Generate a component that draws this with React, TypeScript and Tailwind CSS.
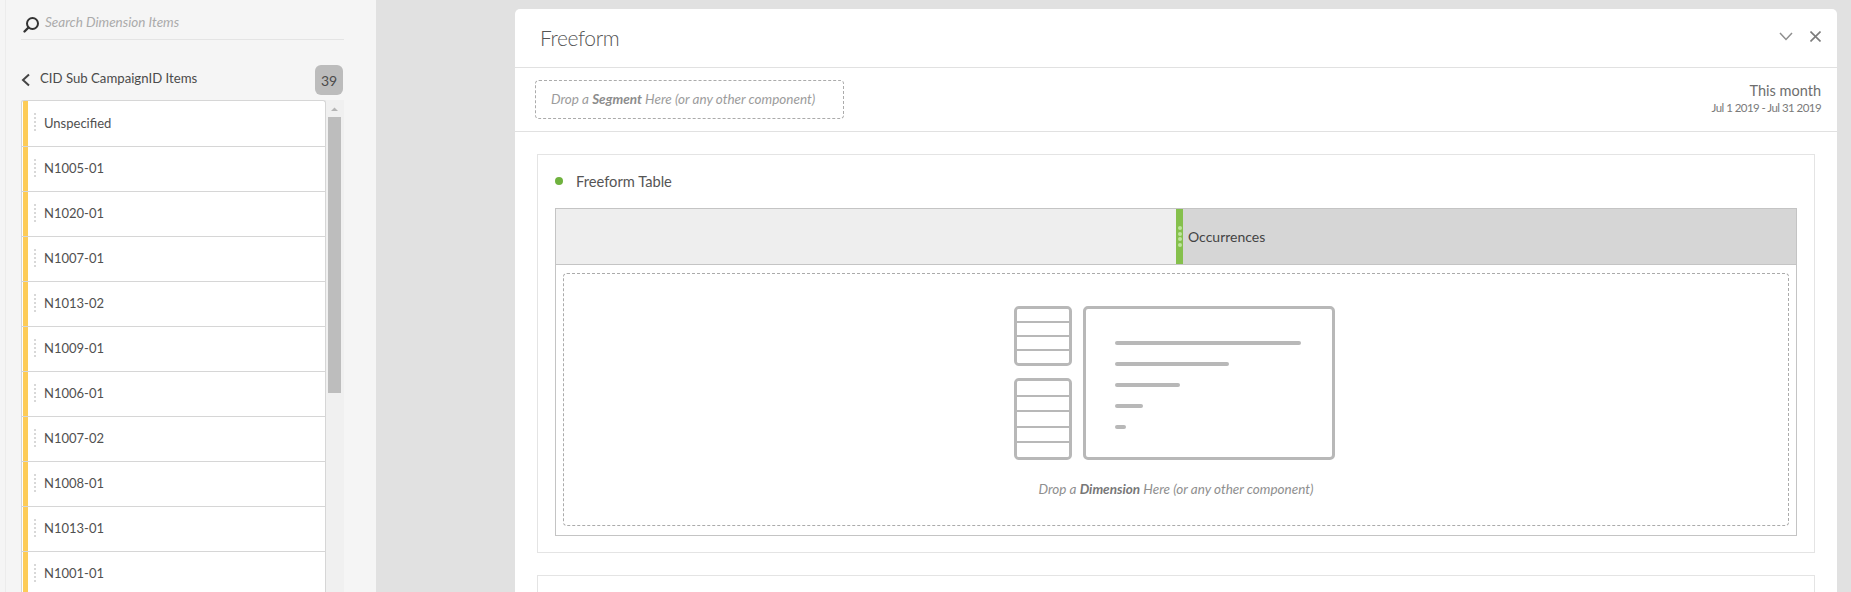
import React from "react";

const items = [
  "Unspecified",
  "N1005-01",
  "N1020-01",
  "N1007-01",
  "N1013-02",
  "N1009-01",
  "N1006-01",
  "N1007-02",
  "N1008-01",
  "N1013-01",
  "N1001-01",
];

function Sidebar() {
  return (
    <aside className="h-full w-[376px] shrink-0 bg-[#f5f5f5] pl-[5px]">
      <div className="flex h-full flex-col border-l border-[#ececec] pl-[15px]">
        <div className="flex h-[40px] w-[323px] items-start border-b border-[#e4e4e4] pt-[14px]">
          <svg width="18" height="18" viewBox="0 0 18 18" className="ml-[1px] mt-[2px]" fill="none">
            <circle cx="10.5" cy="7.5" r="5.5" stroke="#333" strokeWidth="2" />
            <path d="M6.5 11.5L2.5 15.5" stroke="#333" strokeWidth="2.4" strokeLinecap="round" />
          </svg>
          <span className="ml-[5px] text-[13.5px] italic leading-[16px] text-[#ababab]">Search Dimension Items</span>
        </div>
        <div className="mt-[25px] flex h-[30px] w-[322px] items-center">
          <svg width="10" height="14" viewBox="0 0 10 14" fill="none">
            <path d="M8 1.5L2 7L8 12.5" stroke="#444" strokeWidth="2" />
          </svg>
          <span className="ml-[9px] mb-[2px] flex-1 text-[13.2px] text-[#4b4b4b]">CID Sub CampaignID Items</span>
          <span className="flex h-[30px] w-[28px] items-center justify-center rounded-md bg-[#bcbcbc] text-[14px] text-[#4b4b4b]">
            39
          </span>
        </div>
        <div className="mt-[5px] flex min-h-0 w-[323px] flex-1 bg-[#f0f0f0]">
          <ul className="w-[305px] shrink-0 overflow-hidden rounded-t-[3px] border-x border-t border-[#d6d6d6] bg-white">
            {items.map((item, i) => (
              <li
                key={item}
                className={`flex items-center border-b border-[#d6d6d6] ${i === 0 ? "h-[46px]" : "h-[45px]"}`}
              >
                <span className="ml-px h-full w-[5px] bg-[#fdcc58]" />
                <span className="ml-[6px] mb-[3px] h-[18px] border-l-2 border-dotted border-[#d8d8d8]" />
                <span className="ml-[8px] text-[13px] text-[#505050]">{item}</span>
              </li>
            ))}
          </ul>
          <div className="ml-[2px] flex w-[13px] flex-col">
            <svg width="13" height="17" viewBox="0 0 13 17" className="shrink-0">
              <path d="M3 11L6.5 7.5L10 11Z" fill="#b5b5b5" />
            </svg>
            <div className="h-[276px] bg-[#bdbdbd]" />
          </div>
        </div>
      </div>
    </aside>
  );
}

function TableIcon({ rows, height }: { rows: number; height: string }) {
  return (
    <div className={`flex w-[58px] flex-col divide-y-2 divide-[#b8b8b8] overflow-hidden rounded-[5px] border-[3px] border-[#b8b8b8] ${height}`}>
      {Array.from({ length: rows }).map((_, i) => (
        <div key={i} className="flex-1 bg-white" />
      ))}
    </div>
  );
}

function Illustration() {
  return (
    <div className="mr-[3px] flex gap-[11px]">
      <div className="flex flex-col justify-between">
        <TableIcon rows={4} height="h-[60px]" />
        <TableIcon rows={5} height="h-[82px]" />
      </div>
      <div className="flex h-[154px] w-[252px] flex-col gap-[17px] rounded-[5px] border-[3px] border-[#b8b8b8] pl-[29px] pt-[32px]">
        <div className="h-[4px] w-[186px] rounded-full bg-[#b8b8b8]" />
        <div className="h-[4px] w-[114px] rounded-full bg-[#b8b8b8]" />
        <div className="h-[4px] w-[65px] rounded-full bg-[#b8b8b8]" />
        <div className="h-[4px] w-[28px] rounded-full bg-[#b8b8b8]" />
        <div className="h-[4px] w-[11px] rounded-full bg-[#b8b8b8]" />
      </div>
    </div>
  );
}

function FreeformPanel() {
  return (
    <section className="h-[700px] w-[1322px] rounded-t-[5px] bg-white">
      <header className="flex h-[59px] items-center justify-between border-b border-[#e1e1e1] pl-[25px] pr-[16px]">
        <h1 className="text-[21px] font-light tracking-[-0.4px] text-[#555555]">Freeform</h1>
        <div className="flex items-center gap-[17px] pb-[4px]">
          <svg width="14" height="9" viewBox="0 0 14 9" fill="none">
            <path d="M1 1L7 7.5L13 1" stroke="#8e8e8e" strokeWidth="1.5" />
          </svg>
          <svg width="11" height="11" viewBox="0 0 11 11" fill="none">
            <path d="M0.5 0.5L10.5 10.5M10.5 0.5L0.5 10.5" stroke="#7c7c7c" strokeWidth="1.6" />
          </svg>
        </div>
      </header>
      <div className="flex h-[64px] items-center justify-between border-b border-[#e1e1e1] pl-[20px] pr-[16px]">
        <div className="flex h-[39px] w-[309px] items-center rounded-[4px] border border-dashed border-[#ababab] pl-[15px] text-[13.5px] italic text-[#9c9c9c]">
          <span>
            Drop a <b className="text-[#8c8c8c]">Segment</b> Here (or any other component)
          </span>
        </div>
        <div className="pb-[2px] text-right">
          <p className="text-[14.5px] leading-[18px] text-[#6e6e6e]">This month</p>
          <p className="text-[11.5px] leading-[16px] tracking-[-0.55px] text-[#7a7a7a]">Jul 1 2019 - Jul 31 2019</p>
        </div>
      </div>
      <div className="mx-[22px] mt-[22px] h-[399px] border border-[#e4e4e4] px-[17px]">
        <div className="flex h-[53px] items-center pb-[1px]">
          <span className="h-[8px] w-[8px] rounded-full bg-[#6fb23e]" />
          <span className="ml-[13px] text-[14.7px] text-[#555555]">Freeform Table</span>
        </div>
        <div className="h-[328px] border border-[#c4c4c4]">
          <div className="flex h-[56px] border-b border-[#c4c4c4]">
            <div className="w-[620px] bg-[#eeeeee]" />
            <div className="flex w-[7px] flex-col items-center justify-center gap-[1.5px] bg-[#85c04c]">
              <span className="h-[4px] w-[4px] rounded-full bg-[#bfe49c]" />
              <span className="h-[4px] w-[4px] rounded-full bg-[#bfe49c]" />
              <span className="h-[4px] w-[4px] rounded-full bg-[#bfe49c]" />
              <span className="h-[4px] w-[4px] rounded-full bg-[#bfe49c]" />
            </div>
            <div className="flex flex-1 items-center bg-[#d6d6d6] pl-[5px] text-[14px] text-[#444444]">Occurrences</div>
          </div>
          <div className="mx-[7px] mt-[8px] flex h-[253px] flex-col items-center rounded-[4px] border border-dashed border-[#ababab] pt-[32px]">
            <Illustration />
            <p className="mt-[19px] text-[13.5px] italic text-[#8f8f8f]">
              Drop a <b className="text-[#777777]">Dimension</b> Here (or any other component)
            </p>
          </div>
        </div>
      </div>
      <div className="mx-[22px] mt-[22px] h-[100px] border border-[#e4e4e4]" />
    </section>
  );
}

export default function App() {
  return (
    <div className="flex h-[592px] w-[1851px] overflow-hidden bg-[#e1e1e1] font-['Lato',sans-serif]">
      <Sidebar />
      <main className="flex-1 pl-[139px] pt-[9px]">
        <FreeformPanel />
      </main>
    </div>
  );
}
